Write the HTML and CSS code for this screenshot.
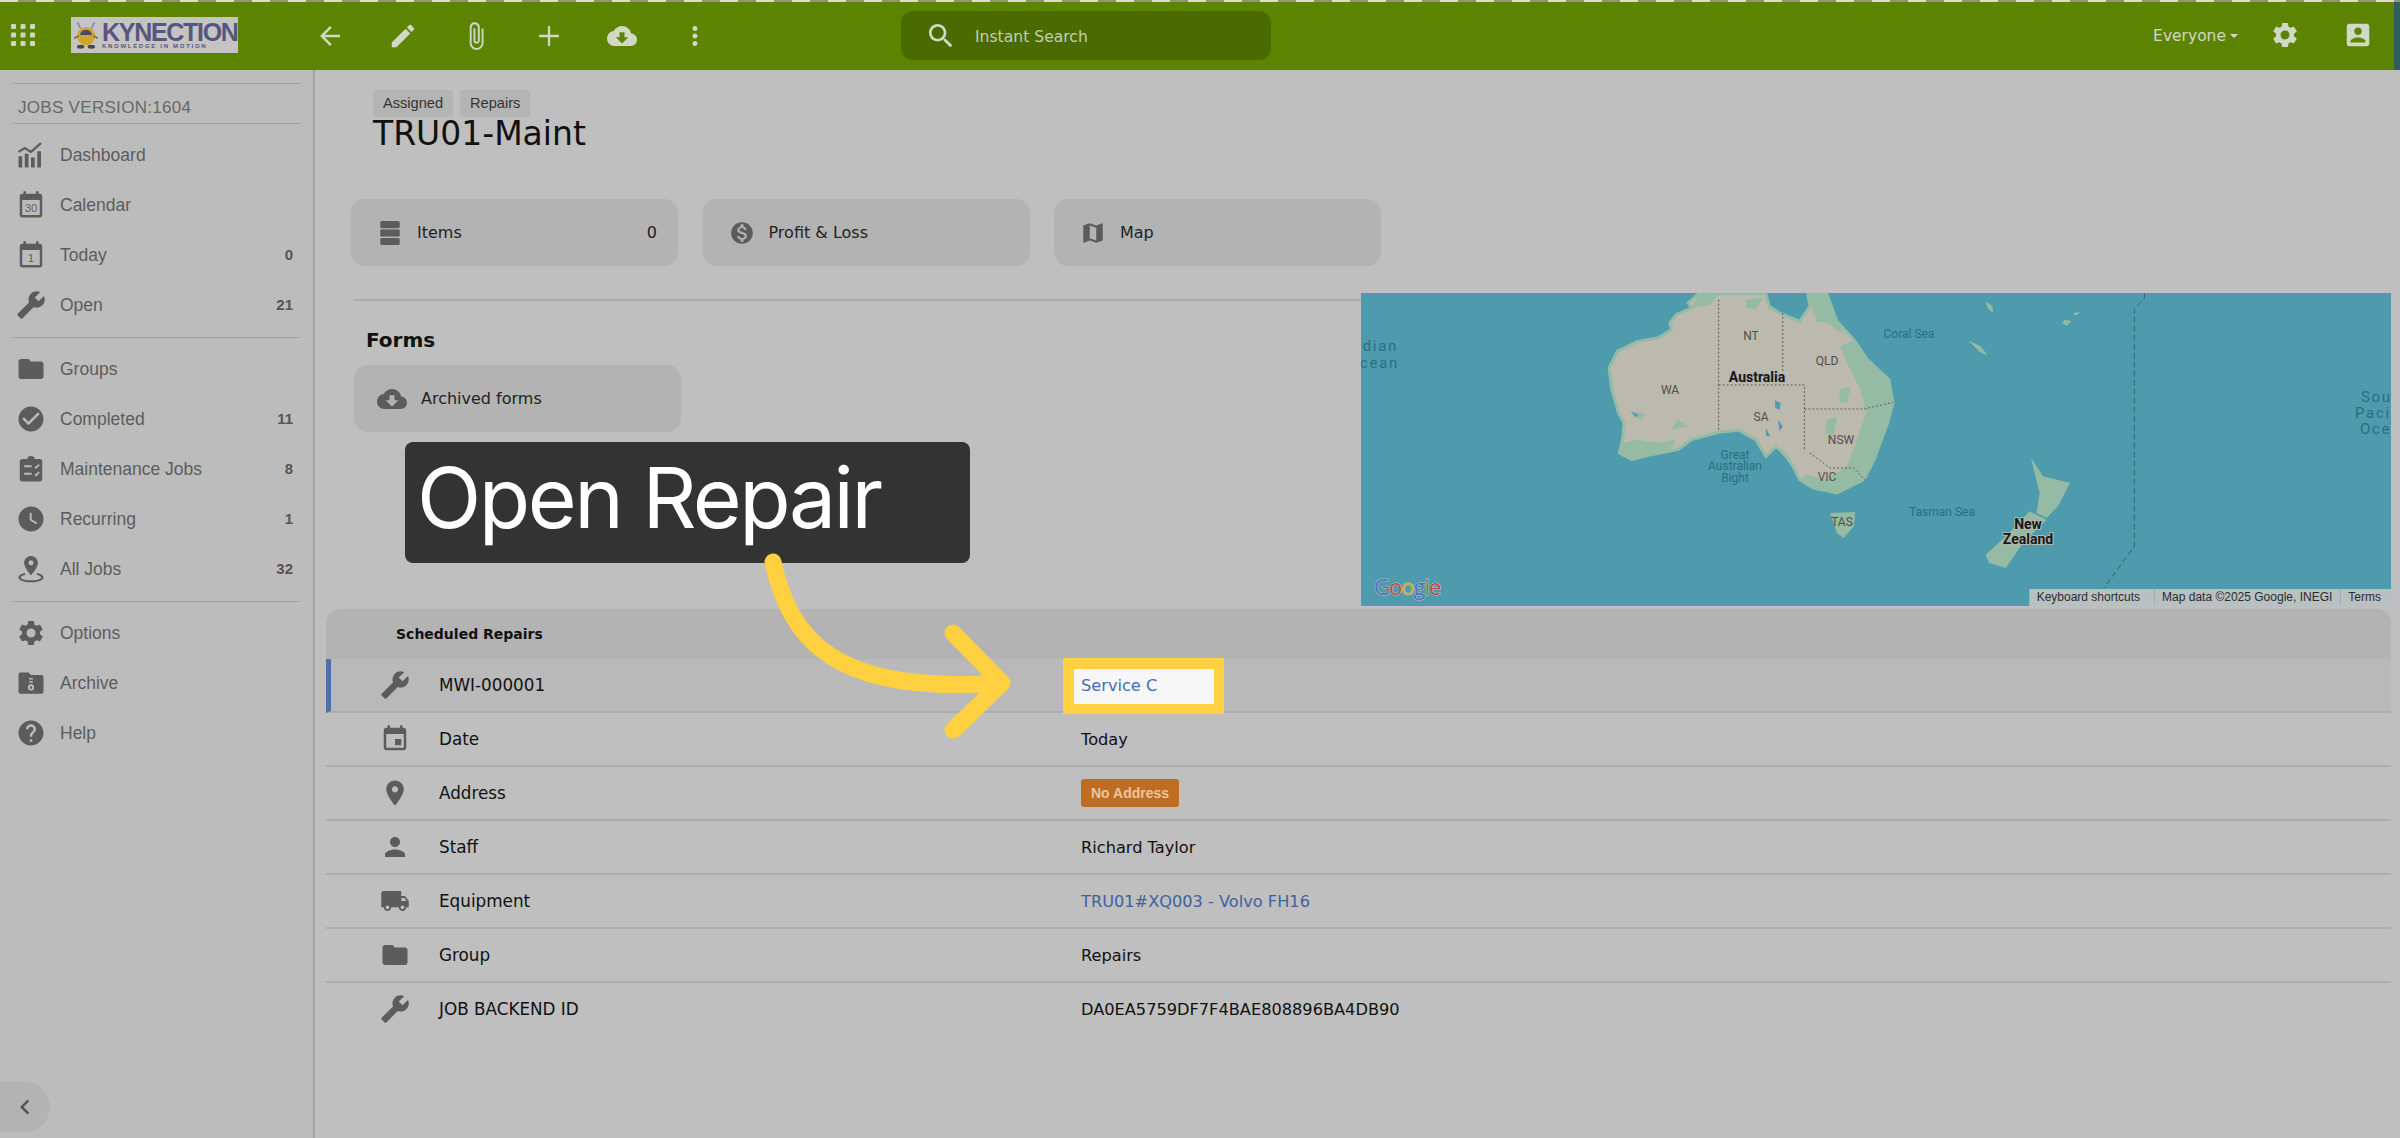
FILE: index.html
```html
<!DOCTYPE html>
<html lang="en">

<head>
    <meta charset="UTF-8">
    <title>TRU01-Maint</title>
    <link rel="stylesheet" href="styles.css">
</head>

<body>
    <!-- icon sprite -->
    <svg class="sprite" xmlns="http://www.w3.org/2000/svg">
        <symbol id="i-back" viewBox="0 0 24 24"><path d="M20 11H7.83l5.59-5.59L12 4l-8 8 8 8 1.41-1.41L7.83 13H20v-2z"/></symbol>
        <symbol id="i-edit" viewBox="0 0 24 24"><path d="M3 17.25V21h3.75L17.81 9.94l-3.75-3.75L3 17.25zM20.71 7.04c.39-.39.39-1.02 0-1.41l-2.34-2.34c-.39-.39-1.02-.39-1.41 0l-1.83 1.83 3.75 3.75 1.83-1.83z"/></symbol>
        <symbol id="i-clip" viewBox="0 0 24 24"><path d="M16.5 6v11.5c0 2.21-1.79 4-4 4s-4-1.79-4-4V5c0-1.38 1.12-2.5 2.5-2.5s2.5 1.12 2.5 2.5v10.5c0 .55-.45 1-1 1s-1-.45-1-1V6H10v9.5c0 1.38 1.12 2.5 2.5 2.5s2.5-1.12 2.5-2.5V5c0-2.21-1.79-4-4-4S7 2.79 7 5v12.5c0 3.04 2.46 5.5 5.5 5.5s5.5-2.46 5.5-5.5V6h-1.5z"/></symbol>
        <symbol id="i-add" viewBox="0 0 24 24"><path d="M19 12.800h-6.200V19h-1.600v-6.200H5v-1.600h6.200V5h1.600v6.200H19v1.600z"/></symbol>
        <symbol id="i-cloud" viewBox="0 0 24 24"><path d="M19.35 10.04C18.67 6.59 15.64 4 12 4 9.11 4 6.6 5.64 5.35 8.04 2.34 8.36 0 10.91 0 14c0 3.31 2.69 6 6 6h13c2.76 0 5-2.24 5-5 0-2.64-2.05-4.78-4.65-4.96zM17 13l-5 5-5-5h3V9h4v4h3z"/></symbol>
        <symbol id="i-more" viewBox="0 0 24 24"><path d="M12 8c1.1 0 2-.9 2-2s-.9-2-2-2-2 .9-2 2 .9 2 2 2zm0 2c-1.1 0-2 .9-2 2s.9 2 2 2 2-.9 2-2-.9-2-2-2zm0 6c-1.1 0-2 .9-2 2s.9 2 2 2 2-.9 2-2-.9-2-2-2z"/></symbol>
        <symbol id="i-search" viewBox="0 0 24 24"><path d="M15.5 14h-.79l-.28-.27C15.41 12.59 16 11.11 16 9.5 16 5.91 13.09 3 9.5 3S3 5.91 3 9.5 5.91 16 9.5 16c1.61 0 3.09-.59 4.23-1.57l.27.28v.79l5 4.99L20.49 19l-4.99-5zm-6 0C7.01 14 5 11.99 5 9.5S7.01 5 9.5 5 14 7.01 14 9.5 11.99 14 9.5 14z"/></symbol>
        <symbol id="i-gear" viewBox="0 0 24 24"><path d="M19.14 12.94c.04-.3.06-.61.06-.94 0-.32-.02-.64-.07-.94l2.03-1.58c.18-.14.23-.41.12-.61l-1.92-3.32c-.12-.22-.37-.29-.59-.22l-2.39.96c-.5-.38-1.03-.7-1.62-.94l-.36-2.54c-.04-.24-.24-.41-.48-.41h-3.84c-.24 0-.43.17-.47.41l-.36 2.54c-.59.24-1.13.57-1.62.94l-2.39-.96c-.22-.08-.47 0-.59.22L2.74 8.87c-.12.21-.08.47.12.61l2.03 1.58c-.05.3-.09.63-.09.94s.02.64.07.94l-2.03 1.58c-.18.14-.23.41-.12.61l1.92 3.32c.12.22.37.29.59.22l2.39-.96c.5.38 1.03.7 1.62.94l.36 2.54c.05.24.24.41.48.41h3.84c.24 0 .44-.17.47-.41l.36-2.54c.59-.24 1.13-.56 1.62-.94l2.39.96c.22.08.47 0 .59-.22l1.92-3.32c.12-.22.07-.47-.12-.61l-2.01-1.58zM12 15.6c-1.98 0-3.6-1.62-3.6-3.6s1.62-3.6 3.6-3.6 3.6 1.62 3.6 3.6-1.62 3.6-3.6 3.6z"/></symbol>
        <symbol id="i-contact" viewBox="0 0 24 24"><path d="M3 5v14c0 1.1.89 2 2 2h14c1.1 0 2-.9 2-2V5c0-1.1-.9-2-2-2H5c-1.11 0-2 .9-2 2zm12 4c0 1.66-1.34 3-3 3s-3-1.34-3-3 1.34-3 3-3 3 1.34 3 3zm-9 8c0-2 4-3.1 6-3.1s6 1.1 6 3.1v1H6v-1z"/></symbol>
        <symbol id="i-chart" viewBox="0 0 24 24"><path d="M2 13h3v9H2zM7 11h3v11H7zM12 14h3v8h-3zM17 9h3v13h-3z"/><path d="M2 9.5l5-3 5 3 8-7" fill="none" stroke="currentColor" stroke-width="1.8"/></symbol>
        <symbol id="i-wrench" viewBox="0 0 24 24"><path transform="matrix(-1 0 0 1 24 0)" d="M22.7 19l-9.1-9.1c.9-2.3.4-5-1.5-6.9-2-2-5-2.4-7.4-1.3L9 6 6 9 1.6 4.7C.4 7.1.9 10.1 2.9 12.1c1.9 1.9 4.6 2.4 6.9 1.5l9.1 9.1c.4.4 1 .4 1.4 0l2.3-2.3c.5-.4.5-1.1.1-1.4z"/></symbol>
        <symbol id="i-folder" viewBox="0 0 24 24"><path d="M10 4H4c-1.1 0-1.99.9-1.99 2L2 18c0 1.1.9 2 2 2h16c1.1 0 2-.9 2-2V8c0-1.1-.9-2-2-2h-8l-2-2z"/></symbol>
        <symbol id="i-check" viewBox="0 0 24 24"><path d="M12 2C6.48 2 2 6.48 2 12s4.48 10 10 10 10-4.48 10-10S17.52 2 12 2zm-2 15l-5-5 1.41-1.41L10 14.17l7.59-7.59L19 8l-9 9z"/></symbol>
        <symbol id="i-tasks" viewBox="0 0 24 24"><path fill-rule="evenodd" d="M5 4h4c0-1.5 1.2-2.5 3-2.5s3 1 3 2.5h4c1.1 0 2 .9 2 2v14c0 1.1-.9 2-2 2H5c-1.1 0-2-.9-2-2V6c0-1.1.9-2 2-2zm1.500 5v1.600h6V9zm0 6v1.600h6V15zm8.300-4.300l1.200 1.200 3-3-1-1-2 2-.3-.3zm0 6l1.200 1.200 3-3-1-1-2 2-.3-.3z"/></symbol>
        <symbol id="i-clock" viewBox="0 0 24 24"><path d="M11.99 2C6.47 2 2 6.48 2 12s4.47 10 9.99 10C17.52 22 22 17.52 22 12S17.52 2 11.99 2zm4.200 14.200L11 13V7h1.500v5.200l4.500 2.700-.8 1.300z"/></symbol>
        <symbol id="i-pinring" viewBox="0 0 24 24"><path d="M12 1.500C9 1.500 6.500 4 6.500 7c0 4 5.500 10 5.500 10s5.500-6 5.500-10c0-3-2.500-5.500-5.500-5.500zm0 7.500a2 2 0 1 1 0-4 2 2 0 0 1 0 4z"/><path d="M7 15.200C4 15.900 2 17.100 2 18.700 2 21 6.500 22.500 12 22.500s10-1.500 10-3.800c0-1.600-2-2.800-5-3.500l-.7 1.300c2.400.5 3.900 1.300 3.900 2.200 0 1.300-3.700 2.300-8.200 2.300s-8.200-1-8.200-2.300c0-.9 1.500-1.700 3.900-2.200z"/></symbol>
        <symbol id="i-archive" viewBox="0 0 24 24"><path fill-rule="evenodd" d="M3.500 3.500H10l2 2h8.500c.8 0 1.500.7 1.500 1.500v12c0 .8-.7 1.500-1.500 1.500h-17c-.8 0-1.500-.7-1.500-1.500V5c0-.8.7-1.500 1.500-1.500zM10.500 8v1.200h3V8zm0 2.500v1.200h3v-1.200zM12 13a2.500 2.500 0 1 0 0 5 2.500 2.500 0 0 0 0-5zm0 1.500a1 1 0 1 1 0 2 1 1 0 0 1 0-2z"/></symbol>
        <symbol id="i-help" viewBox="0 0 24 24"><path d="M12 2C6.48 2 2 6.48 2 12s4.48 10 10 10 10-4.48 10-10S17.52 2 12 2zm1 17h-2v-2h2v2zm2.070-7.750l-.9.920C13.450 12.900 13 13.500 13 15h-2v-.5c0-1.100.45-2.100 1.170-2.830l1.240-1.260c.37-.36.59-.86.59-1.410 0-1.100-.9-2-2-2s-2 .9-2 2H8c0-2.210 1.790-4 4-4s4 1.790 4 4c0 .88-.36 1.680-.93 2.250z"/></symbol>
        <symbol id="i-stack" viewBox="0 0 24 24"><rect x="3" y="1" width="18" height="6.500" rx="1.500"/><rect x="3" y="8.800" width="18" height="6.500" rx=".5"/><rect x="3" y="16.600" width="18" height="6.500" rx="1.500"/></symbol>
        <symbol id="i-dollar" viewBox="0 0 24 24"><path d="M12 2C6.480 2 2 6.480 2 12s4.480 10 10 10 10-4.480 10-10S17.520 2 12 2zm1.410 16.090V20h-2.670v-1.930c-1.710-.36-3.160-1.460-3.270-3.400h1.960c.1 1.050.82 1.870 2.650 1.870 1.960 0 2.400-.98 2.400-1.590 0-.83-.44-1.610-2.670-2.140-2.480-.6-4.180-1.620-4.180-3.670 0-1.720 1.390-2.840 3.110-3.210V4h2.670v1.950c1.860.45 2.790 1.860 2.870 3.390H14.300c-.05-1.110-.64-1.870-2.220-1.870-1.500 0-2.400.68-2.400 1.640 0 .84.65 1.390 2.670 1.910s4.180 1.390 4.180 3.910c-.01 1.830-1.380 2.830-3.120 3.160z"/></symbol>
        <symbol id="i-map" viewBox="0 0 24 24"><path d="M20.500 3l-.16.03L15 5.100 9 3 3.360 4.900c-.21.07-.36.25-.36.48V20.500c0 .28.22.5.5.5l.16-.03L9 18.900l6 2.100 5.640-1.900c.21-.07.36-.25.36-.48V3.500c0-.28-.22-.5-.5-.5zM15 19l-6-2.110V5l6 2.110V19z"/></symbol>
        <symbol id="i-event" viewBox="0 0 24 24"><path d="M17 12h-5v5h5v-5zM16 1v2H8V1H6v2H5c-1.110 0-1.990.9-1.990 2L3 19c0 1.100.89 2 2 2h14c1.100 0 2-.9 2-2V5c0-1.100-.9-2-2-2h-1V1h-2zm3 18H5V8h14v11z"/></symbol>
        <symbol id="i-place" viewBox="0 0 24 24"><path d="M12 2C8.130 2 5 5.130 5 9c0 5.250 7 13 7 13s7-7.750 7-13c0-3.870-3.130-7-7-7zm0 9.500c-1.380 0-2.500-1.120-2.500-2.500s1.120-2.500 2.500-2.500 2.500 1.120 2.500 2.500-1.120 2.500-2.500 2.500z"/></symbol>
        <symbol id="i-person" viewBox="0 0 24 24"><path d="M12 12c2.210 0 4-1.790 4-4s-1.790-4-4-4-4 1.790-4 4 1.790 4 4 4zm0 2c-2.670 0-8 1.340-8 4v2h16v-2c0-2.660-5.330-4-8-4z"/></symbol>
        <symbol id="i-truck" viewBox="0 0 24 24"><path d="M20 8h-3V4H3c-1.100 0-2 .9-2 2v11h2c0 1.660 1.340 3 3 3s3-1.340 3-3h6c0 1.660 1.340 3 3 3s3-1.340 3-3h2v-5l-3-4zM6 18.500c-.83 0-1.500-.67-1.500-1.500s.67-1.500 1.500-1.500 1.500.67 1.500 1.500-.67 1.500-1.500 1.500zm13.500-9l1.960 2.500H17V9.500h2.500zm-1.500 9c-.83 0-1.500-.67-1.500-1.500s.67-1.500 1.500-1.500 1.500.67 1.500 1.500-.67 1.500-1.500 1.500z"/></symbol>
        <symbol id="i-chevron" viewBox="0 0 24 24"><path d="M15.410 7.410L14 6l-6 6 6 6 1.410-1.410L10.830 12z"/></symbol>
    </svg>

    <!-- top bar -->
    <header class="topbar">
        <svg class="apps" viewBox="0 0 24 22">
            <rect x="0" y="0" width="5" height="5" rx="1"/><rect x="9.500" y="0" width="5" height="5" rx="1"/><rect x="19" y="0" width="5" height="5" rx="1"/>
            <rect x="0" y="8.500" width="5" height="5" rx="1"/><rect x="9.500" y="8.500" width="5" height="5" rx="1"/><rect x="19" y="8.500" width="5" height="5" rx="1"/>
            <rect x="0" y="17" width="5" height="5" rx="1"/><rect x="9.500" y="17" width="5" height="5" rx="1"/><rect x="19" y="17" width="5" height="5" rx="1"/>
        </svg>
        <div class="logo">
            <svg class="mascot" viewBox="0 0 26 28">
                <path d="M8 8L5 2M18 8l3-6" stroke="#8d8aa8" stroke-width="1.500" fill="none"/>
                <circle cx="13" cy="15" r="8.500" fill="#d1a52a"/>
                <path d="M7.500 14a5.500 5 0 0 1 11 0z" fill="#4a4a6a"/>
                <path d="M2 17l4-2M24 17l-4-2" stroke="#6d6a50" stroke-width="1.500"/>
                <ellipse cx="8" cy="25" rx="3.500" ry="1.800" fill="#4a4a4a"/>
                <ellipse cx="18" cy="25" rx="3.500" ry="1.800" fill="#4a4a4a"/>
            </svg>
            <div class="logo-text">
                <div class="logo-name">KYNECTION</div>
                <div class="logo-sub">KNOWLEDGE IN MOTION</div>
            </div>
        </div>
        <nav class="tools">
            <span class="tool"><svg class="ic-top"><use href="#i-back"/></svg></span>
            <span class="tool"><svg class="ic-top"><use href="#i-edit"/></svg></span>
            <span class="tool"><svg class="ic-top ic-clip"><use href="#i-clip"/></svg></span>
            <span class="tool"><svg class="ic-top ic-plus"><use href="#i-add"/></svg></span>
            <span class="tool"><svg class="ic-top"><use href="#i-cloud"/></svg></span>
            <span class="tool"><svg class="ic-top"><use href="#i-more"/></svg></span>
        </nav>
        <div class="search">
            <svg class="ic-search"><use href="#i-search"/></svg>
            <span class="search-text">Instant Search</span>
        </div>
        <div class="top-right">
            <span class="everyone">Everyone<i class="caret"></i></span>
            <span class="tool"><svg class="ic-top"><use href="#i-gear"/></svg></span>
            <span class="tool"><svg class="ic-top"><use href="#i-contact"/></svg></span>
        </div>
    </header>

    <div class="page">
        <!-- side menu -->
        <aside class="sidebar">
            <hr class="rule">
            <div class="version">JOBS VERSION:1604</div>
            <hr class="rule rule-second">
            <a class="menu-row"><svg class="ic"><use href="#i-chart"/></svg><span class="menu-label">Dashboard</span></a>
            <a class="menu-row">
                <svg class="ic" viewBox="0 0 24 24"><path d="M6 1h2v2h8V1h2v2h1c1.100 0 2 .9 2 2v15c0 1.100-.9 2-2 2H5c-1.100 0-2-.9-2-2V5c0-1.100.9-2 2-2h1zM5 8v12h14V8z"/><text class="cal-num" x="12" y="17.500">30</text></svg>
                <span class="menu-label">Calendar</span>
            </a>
            <a class="menu-row">
                <svg class="ic" viewBox="0 0 24 24"><path d="M6 1h2v2h8V1h2v2h1c1.100 0 2 .9 2 2v15c0 1.100-.9 2-2 2H5c-1.100 0-2-.9-2-2V5c0-1.100.9-2 2-2h1zM5 8v12h14V8z"/><text class="cal-num" x="12" y="17.500">1</text></svg>
                <span class="menu-label">Today</span><b class="count">0</b>
            </a>
            <a class="menu-row"><svg class="ic"><use href="#i-wrench"/></svg><span class="menu-label">Open</span><b class="count">21</b></a>
            <hr class="rule rule-menu">
            <a class="menu-row"><svg class="ic"><use href="#i-folder"/></svg><span class="menu-label">Groups</span></a>
            <a class="menu-row"><svg class="ic"><use href="#i-check"/></svg><span class="menu-label">Completed</span><b class="count">11</b></a>
            <a class="menu-row"><svg class="ic"><use href="#i-tasks"/></svg><span class="menu-label">Maintenance Jobs</span><b class="count">8</b></a>
            <a class="menu-row"><svg class="ic"><use href="#i-clock"/></svg><span class="menu-label">Recurring</span><b class="count">1</b></a>
            <a class="menu-row"><svg class="ic"><use href="#i-pinring"/></svg><span class="menu-label">All Jobs</span><b class="count">32</b></a>
            <hr class="rule rule-menu">
            <a class="menu-row"><svg class="ic"><use href="#i-gear"/></svg><span class="menu-label">Options</span></a>
            <a class="menu-row"><svg class="ic"><use href="#i-archive"/></svg><span class="menu-label">Archive</span></a>
            <a class="menu-row"><svg class="ic"><use href="#i-help"/></svg><span class="menu-label">Help</span></a>
            <div class="collapse"><svg class="ic-chevron"><use href="#i-chevron"/></svg></div>
        </aside>

        <main class="content">
            <div class="job-head">
                <div class="tags"><span class="tag">Assigned</span><span class="tag">Repairs</span></div>
                <h1 class="job-title">TRU01-Maint</h1>
            </div>

            <div class="cards">
                <div class="card"><svg class="ic-card"><use href="#i-stack"/></svg><span class="card-label">Items</span><span class="card-count">0</span></div>
                <div class="card"><svg class="ic-card"><use href="#i-dollar"/></svg><span class="card-label">Profit &amp; Loss</span></div>
                <div class="card"><svg class="ic-card"><use href="#i-map"/></svg><span class="card-label">Map</span></div>
            </div>

            <div class="split">
                <div class="forms">
                    <hr class="rule-forms">
                    <h3 class="forms-title">Forms</h3>
                    <div class="card card-archived"><svg class="ic-card ic-cloud-card"><use href="#i-cloud"/></svg><span class="card-label">Archived forms</span></div>
                </div>

                <!-- map, drawn by hand -->
                <div class="map">
                    <svg class="map-svg" viewBox="0 0 1030 313">
                        <g transform="scale(.676 .3333) translate(-31 -40)">
                            <path class="land" d="M530 42L515 70 520 85 497 105 488 130 490 150 470 175 440 185 410 215 398 265 402 330 412 400 420 430 418 480 413 520 432 540 460 525 500 510 520 480 560 458 590 452 615 480 630 530 645 500 660 530 670 560 680 600 700 625 735 640 775 600 790 540 810 430 818 370 812 300 780 240 760 180 735 125 720 42 692 42 695 80 680 125 650 100 635 80 630 42z"/>
                            <path class="green" d="M760 180L780 240 812 300 818 370 810 430 790 540 775 600 735 640 700 625 680 600 690 585 720 600 750 560 765 480 778 400 770 330 752 260 740 200zM692 42L720 42 735 125 745 165 722 130 705 125zM530 42L560 42 548 75 520 85zM418 490L440 480 470 490 495 480 490 510 460 525 432 540 413 520z"/>
                            <path class="green" d="M720 420L735 410 730 470 718 460zM740 330L755 320 750 370 738 365zM600 60L625 55 615 90 600 85zM500 420L515 440 490 450zM440 395L452 405 445 420 436 410z"/>
                            <path class="land-edge" d="M725 700L762 697 760 740 745 775 735 760z"/>
                            <path class="land-edge" d="M1022 535L1040 590 1080 610 1062 680 1045 715 1030 700 1035 640zM1020 695L1045 720 1010 790 985 865 960 850 955 825 985 770z"/>
                            <path class="land-edge" d="M930 183L948 200 958 228 945 215zM955 65L965 80 966 100 958 85zM1072 120L1082 125 1075 138 1068 130zM1085 100L1095 97 1088 108z"/>
                            <path class="water" d="M643 362L652 370 650 390 644 385zM648 420L655 440 650 455zM630 445L636 470 630 470zM430 395L442 405 437 412z"/>
                            <path class="state-line" d="M560 60V450M655 100V280M560 316H687V515M687 388H775L818 368M695 520L725 565H760L778 605"/>
                            <path class="date-line" d="M1190 42V55L1175 90V800L1130 925"/>
                        </g>
                        <text class="map-sea" text-anchor="end" x="37" y="58">dian</text>
                        <text class="map-sea" text-anchor="end" x="38" y="75">cean</text>
                        <text class="map-sea" x="1000" y="109">Sou</text>
                        <text class="map-sea" x="994" y="125">Paci</text>
                        <text class="map-sea" x="999" y="141">Oce</text>
                        <text class="map-sea-sm" x="548" y="45">Coral Sea</text>
                        <text class="map-sea-sm" x="581" y="223">Tasman Sea</text>
                        <text class="map-sea-sm" x="374" y="166">Great</text>
                        <text class="map-sea-sm" x="374" y="177">Australian</text>
                        <text class="map-sea-sm" x="374" y="189">Bight</text>
                        <text class="map-state" x="390" y="47">NT</text>
                        <text class="map-state" x="466" y="72">QLD</text>
                        <text class="map-state" x="309" y="101">WA</text>
                        <text class="map-state" x="400" y="128">SA</text>
                        <text class="map-state" x="480" y="151">NSW</text>
                        <text class="map-state" x="466" y="188">VIC</text>
                        <text class="map-state" x="481" y="233">TAS</text>
                        <text class="map-country" x="396" y="89">Australia</text>
                        <text class="map-country" x="667" y="236">New</text>
                        <text class="map-country" x="667" y="251">Zealand</text>
                        <text class="map-google" x="13" y="302"><tspan fill="#4f6fc0">G</tspan><tspan fill="#c04a3c">o</tspan><tspan fill="#cfa524">o</tspan><tspan fill="#4f6fc0">g</tspan><tspan fill="#4a9a58">l</tspan><tspan fill="#c04a3c">e</tspan></text>
                    </svg>
                    <div class="map-credits">
                        <span>Keyboard shortcuts</span><span>Map data ©2025 Google, INEGI</span><span>Terms</span>
                    </div>
                </div>
            </div>

            <section class="repairs">
                <div class="repairs-head">Scheduled Repairs</div>
                <div class="row row-active">
                    <svg class="ic-row"><use href="#i-wrench"/></svg><span class="row-label">MWI-000001</span>
                    <span class="row-value"><span class="spot"></span><a class="link link-spot">Service C</a></span>
                </div>
                <div class="row"><svg class="ic-row"><use href="#i-event"/></svg><span class="row-label">Date</span><span class="row-value">Today</span></div>
                <div class="row"><svg class="ic-row"><use href="#i-place"/></svg><span class="row-label">Address</span><span class="row-value"><span class="badge">No Address</span></span></div>
                <div class="row"><svg class="ic-row"><use href="#i-person"/></svg><span class="row-label">Staff</span><span class="row-value">Richard Taylor</span></div>
                <div class="row"><svg class="ic-row"><use href="#i-truck"/></svg><span class="row-label">Equipment</span><span class="row-value"><a class="link">TRU01#XQ003 - Volvo FH16</a></span></div>
                <div class="row"><svg class="ic-row"><use href="#i-folder"/></svg><span class="row-label">Group</span><span class="row-value">Repairs</span></div>
                <div class="row row-last"><svg class="ic-row"><use href="#i-wrench"/></svg><span class="row-label">JOB BACKEND ID</span><span class="row-value">DA0EA5759DF7F4BAE808896BA4DB90</span></div>
            </section>
        </main>
    </div>

    <!-- guide step callout -->
    <div class="callout">Open Repair</div>
    <svg class="arrow" viewBox="740 550 290 200">
        <path d="M773 562C790 640 835 695 1000 683M953 633L1002 683 953 730"/>
    </svg>
</body>

</html>
```

FILE: styles.css
```css
* {
    box-sizing: border-box;
}

body {
    margin: 0;
    width: 2400px;
    height: 1138px;
    overflow: hidden;
    position: relative;
    background-color: #bfbfbf;
    font-family: "DejaVu Sans", sans-serif;
    font-size: 14px;
    color: #111;
}

.sprite {
    display: none;
}

/* top bar */

.topbar {
    position: relative;
    display: flex;
    align-items: center;
    height: 70px;
    background-color: #5c8400;
    border-right: 6px solid #2f6060;
}

.topbar::before {
    content: "";
    position: absolute;
    top: 0;
    left: 0;
    right: -6px;
    height: 2px;
    background: repeating-linear-gradient(90deg, #dcdccf 0 18px, #8f9a78 18px 36px);
}

.apps {
    width: 24px;
    height: 22px;
    margin-left: 11px;
    fill: #cfd6bf;
}

.logo {
    display: flex;
    align-items: center;
    width: 167px;
    height: 36px;
    margin-left: 36px;
    padding-left: 1px;
    overflow: hidden;
    background-color: #c4c4c4;
}

.mascot {
    flex: none;
    width: 28px;
    height: 30px;
}

.logo-text {
    margin-left: 2px;
    white-space: nowrap;
    font-family: "Liberation Sans", sans-serif;
    font-weight: bold;
    color: #56567f;
}

.logo-name {
    font-size: 25px;
    line-height: 22px;
    letter-spacing: -1.300px;
}

.logo-sub {
    font-size: 6px;
    line-height: 7px;
    letter-spacing: 1.700px;
}

.tools {
    display: flex;
    margin-left: 55px;
    padding-top: 2px;
}

.tool {
    display: flex;
    align-items: center;
    justify-content: center;
    width: 73px;
    height: 44px;
}

.ic-top {
    width: 30px;
    height: 30px;
    fill: #d2d8c6;
}

.ic-clip {
    height: 34px;
}

.ic-plus {
    width: 34px;
    height: 34px;
}

.search {
    display: flex;
    align-items: center;
    width: 370px;
    height: 49px;
    margin-left: 170px;
    padding-left: 24px;
    border-radius: 12px;
    background-color: #4a6b00;
    color: #c3ceae;
    font-size: 15.600px;
}

.ic-search {
    width: 32px;
    height: 32px;
    margin-top: 2px;
    margin-right: 18px;
    fill: #d2d8c6;
}

.search-text {
    margin-top: 3px;
}

.top-right {
    display: flex;
    align-items: center;
    margin-left: auto;
}

.everyone {
    display: flex;
    align-items: center;
    margin-top: 2px;
    margin-right: 10px;
    color: #d2d8c6;
    font-size: 15.500px;
}

.caret {
    width: 0;
    height: 0;
    margin-left: 4px;
    border-left: 4px solid transparent;
    border-right: 4px solid transparent;
    border-top: 4px solid #d2d8c6;
}

/* page columns */

.page {
    display: flex;
    height: 1068px;
}

.sidebar {
    position: relative;
    flex: none;
    width: 315px;
    padding: 13px 13px 0 0;
    background-color: #bcbcbc;
    border-right: 2px solid #a3a3a3;
    font-family: "Liberation Sans", sans-serif;
}

.rule {
    height: 1px;
    margin: 0 0 0 13px;
    border: 0;
    background-color: #a0a0a0;
}

.rule-second {
    margin-bottom: 6px;
}

.rule-menu {
    margin-top: 7px;
    margin-bottom: 6px;
}

.version {
    height: 39px;
    padding-left: 18px;
    line-height: 47px;
    font-size: 17px;
    letter-spacing: .3px;
    color: #686868;
}

.menu-row {
    display: flex;
    align-items: center;
    height: 50px;
    padding-left: 16px;
    color: #5c5c5c;
    fill: #5c5c5c;
    font-size: 17.500px;
}

.ic {
    flex: none;
    width: 30px;
    height: 30px;
    margin-right: 14px;
    color: #5c5c5c;
}

.cal-num {
    font-family: "Liberation Sans", sans-serif;
    font-size: 9px;
    text-anchor: middle;
}

.count {
    margin-left: auto;
    margin-right: 7px;
    margin-bottom: 2px;
    font-size: 15px;
    color: #555;
}

.collapse {
    position: absolute;
    left: 0;
    bottom: 6px;
    display: flex;
    align-items: center;
    width: 50px;
    height: 50px;
    padding-left: 10px;
    border-radius: 0 25px 25px 0;
    background-color: #b3b3b3;
}

.ic-chevron {
    width: 30px;
    height: 30px;
    fill: #555;
}

/* main column */

.content {
    flex: 1;
    min-width: 0;
}

.job-head {
    margin-left: 58px;
    padding-top: 20px;
    height: 129px;
}

.tags {
    display: flex;
    gap: 7px;
}

.tag {
    height: 27px;
    padding: 0 10px;
    border-radius: 3px;
    background-color: #b4b4b4;
    font-family: "Liberation Sans", sans-serif;
    font-size: 14.600px;
    line-height: 27px;
    color: #333;
}

.job-title {
    margin: 0;
    font-size: 33px;
    font-weight: normal;
    line-height: 33px;
}

.cards {
    display: flex;
    gap: 24.500px;
    margin-left: 36px;
}

.card {
    display: flex;
    align-items: center;
    width: 327px;
    height: 67px;
    padding: 0 21px 0 26px;
    border-radius: 14px;
    background-color: #b3b3b3;
}

.ic-card {
    flex: none;
    width: 26px;
    height: 26px;
    margin-right: 14px;
    fill: #5c5c5c;
}

.card-label {
    font-size: 16px;
    color: #222;
}

.card-count {
    margin-left: auto;
    font-size: 16px;
    color: #222;
}

.split {
    display: flex;
    height: 313px;
    margin-top: 27px;
    margin-left: 39px;
}

.forms {
    flex: none;
    width: 1007px;
    padding-top: 6px;
}

.rule-forms {
    height: 2px;
    margin: 0;
    border: 0;
    background-color: #adadad;
}

.forms-title {
    margin: 26px 0 12px 12px;
    font-size: 20px;
    line-height: 26px;
    color: #111;
}

.card-archived {
    padding-left: 23px;
}

.ic-cloud-card {
    width: 30px;
    height: 30px;
    margin-right: 14px;
}

/* map */

.map {
    position: relative;
    flex: none;
    width: 1030px;
    height: 313px;
    overflow: hidden;
    background-color: #4d9bad;
}

.map-svg {
    display: block;
    width: 1030px;
    height: 313px;
}

.land {
    fill: #bcb9ae;
    stroke: #93bba5;
    stroke-width: 3px;
    vector-effect: non-scaling-stroke;
}

.land-edge,
.green {
    fill: #95bba4;
}

.water {
    fill: #4d9bad;
}

.state-line {
    fill: none;
    stroke: #5e5e5e;
    stroke-width: 1px;
    stroke-dasharray: 2 2;
    vector-effect: non-scaling-stroke;
}

.date-line {
    fill: none;
    stroke: #3f5f68;
    stroke-width: 1px;
    stroke-dasharray: 6 3;
    vector-effect: non-scaling-stroke;
}

.map-sea {
    font-family: Roboto, sans-serif;
    font-size: 15px;
    letter-spacing: 1.700px;
    fill: #2a6f80;
}

.map-sea-sm {
    font-family: Roboto, sans-serif;
    font-size: 12px;
    fill: #2a6f80;
    text-anchor: middle;
}

.map-state {
    font-family: Roboto, sans-serif;
    font-size: 12px;
    fill: #4f4f4f;
    text-anchor: middle;
}

.map-country {
    font-family: Roboto, sans-serif;
    font-size: 14px;
    font-weight: bold;
    fill: #161616;
    text-anchor: middle;
    paint-order: stroke;
    stroke: #b5b5b0;
    stroke-width: 2px;
}

.map-google {
    font-family: "Open Sans", sans-serif;
    font-size: 22px;
    letter-spacing: -1px;
    paint-order: stroke;
    stroke: #c4c4c4;
    stroke-width: 1px;
}

.map-credits {
    position: absolute;
    right: 0;
    bottom: 0;
    display: flex;
    height: 17px;
    background-color: #b9c0c2;
    font-family: "Liberation Sans", sans-serif;
    font-size: 12px;
    line-height: 17px;
    color: #2c2c2c;
}

.map-credits span {
    padding: 0 8px 0 7px;
    border-left: 1px solid #a3adb0;
}

.map-credits span:first-child {
    padding-right: 14px;
}

.map-credits span:last-child {
    padding-right: 10px;
}

/* repairs table */

.repairs {
    margin: 3px 9px 0 11px;
}

.repairs-head {
    height: 50px;
    padding-left: 70px;
    border-radius: 14px 14px 0 0;
    background-color: #b3b3b3;
    font-size: 14px;
    font-weight: bold;
    line-height: 50px;
}

.row {
    display: flex;
    align-items: center;
    height: 54px;
    padding-left: 54px;
    border-bottom: 2px solid #adadad;
}

.row-active {
    background-color: #b9b9b9;
    border-left: 5px solid #4a72a8;
    padding-left: 49px;
}

.row-last {
    border-bottom: 0;
    padding-bottom: 2px;
}

.ic-row {
    flex: none;
    width: 30px;
    height: 30px;
    margin-right: 29px;
    fill: #5c5c5c;
}

.row-label {
    flex: none;
    width: 642px;
    font-size: 16.800px;
}

.row-value {
    position: relative;
    font-size: 16.200px;
}

.link {
    color: #3d62a0;
}

.spot {
    position: absolute;
    left: -18px;
    top: -18px;
    width: 161px;
    height: 56px;
    border: 11px solid #ffd140;
    border-width: 11px 10px 10px 11px;
    background-color: #f7f7f7;
}

.link-spot {
    position: relative;
    color: #3f6ec0;
}

.badge {
    display: inline-block;
    height: 28px;
    padding: 0 10px;
    border-radius: 3px;
    background-color: #c06d24;
    font-family: "Liberation Sans", sans-serif;
    font-size: 14px;
    font-weight: bold;
    line-height: 28px;
    color: #e6c7a2;
}

/* guide overlay */

.callout {
    position: absolute;
    left: 405px;
    top: 442px;
    width: 565px;
    height: 121px;
    padding-left: 12px;
    border-radius: 8px;
    background-color: #333;
    font-family: Inter, sans-serif;
    font-size: 84px;
    line-height: 112px;
    letter-spacing: -2.500px;
    color: #fff;
}

.arrow {
    position: absolute;
    left: 740px;
    top: 550px;
    width: 290px;
    height: 200px;
}

.arrow path {
    fill: none;
    stroke: #ffd140;
    stroke-width: 17px;
    stroke-linecap: round;
    stroke-linejoin: round;
}
```
